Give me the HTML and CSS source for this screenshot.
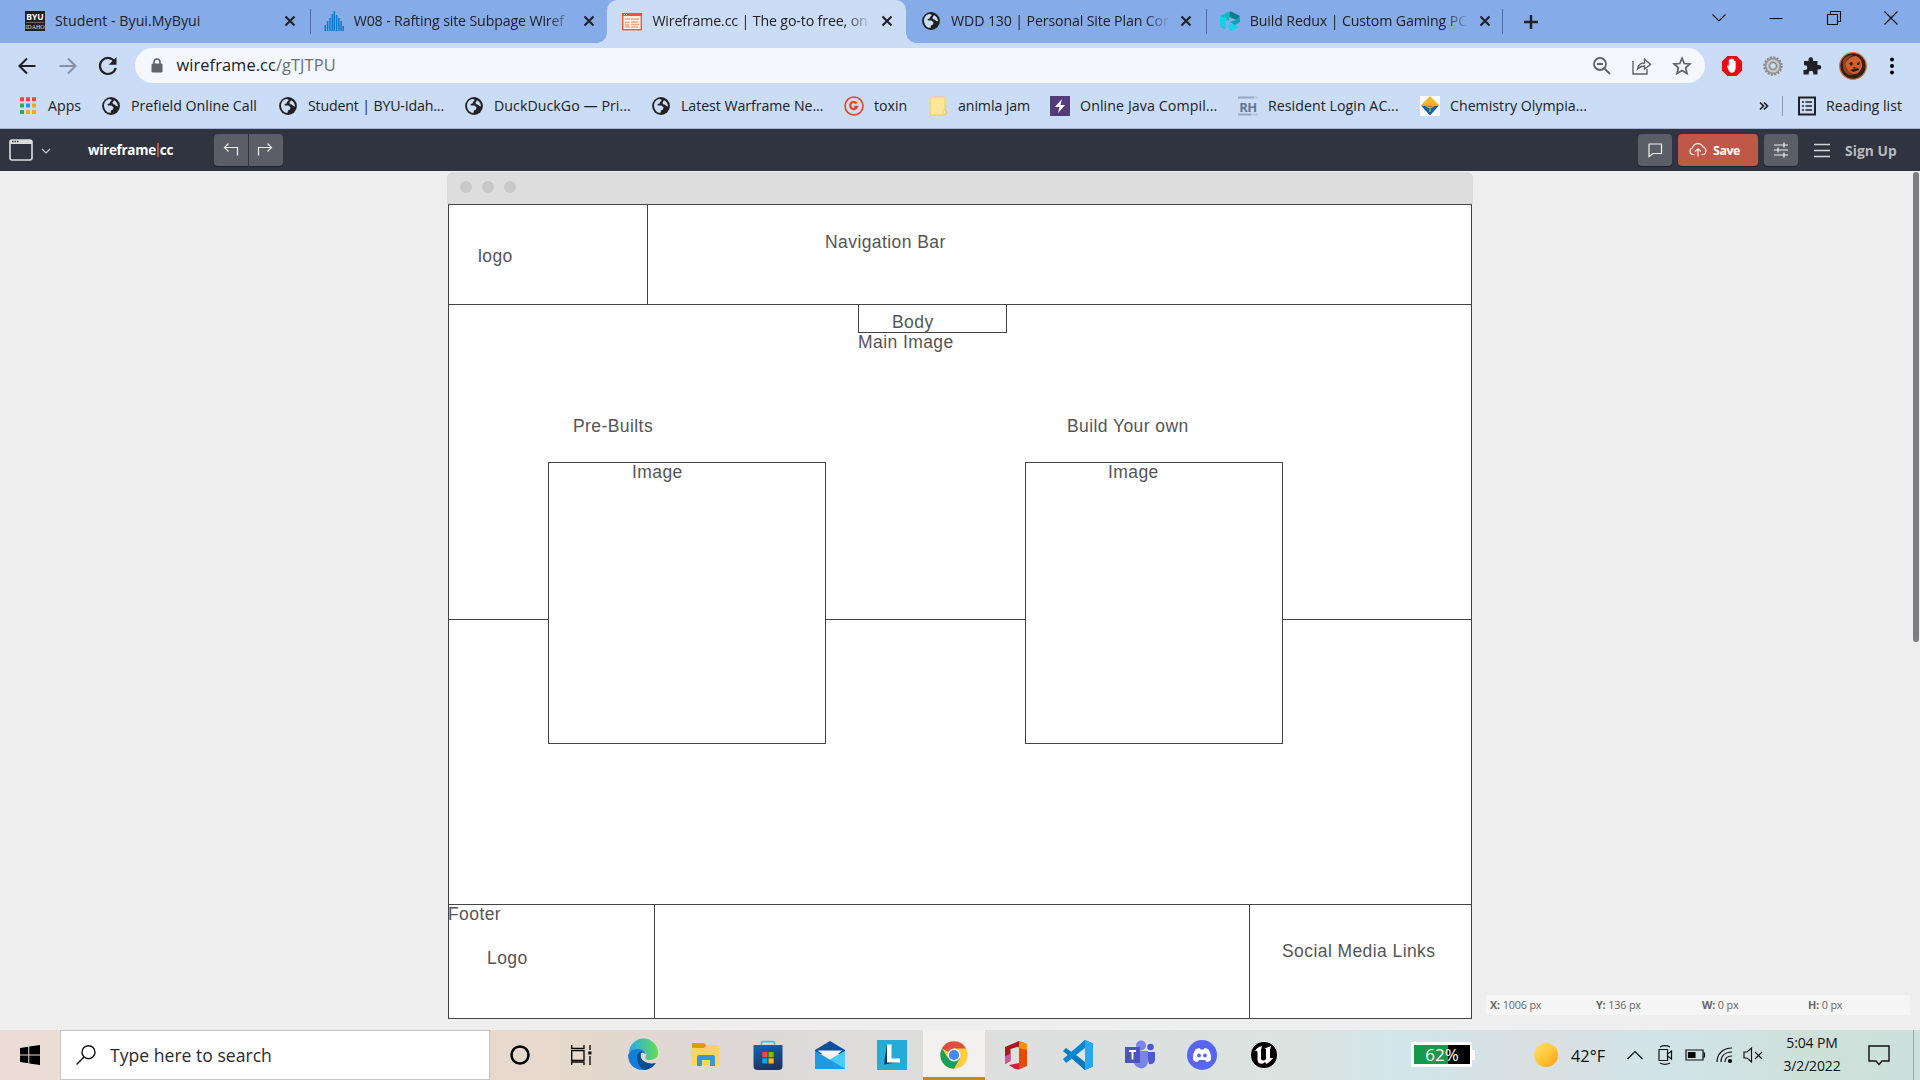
FILE: index.html
```html
<!DOCTYPE html>
<html lang="en">
<head>
<meta charset="utf-8">
<title>Wireframe.cc</title>
<link rel="stylesheet" href="styles.css">
</head>
<body>
<svg width="0" height="0" class="defs" aria-hidden="true">
  <defs>
    <symbol id="globe" viewBox="0 0 18 18"><circle cx="9" cy="9" r="8.9" fill="#202124"/><path d="M2 8.500C2 5 4.300 2.300 7.500 1.900C9 2 9.800 2.600 9.600 3.600L8 5L7.600 6.500L5.500 7L6 8.500H9.500L11.500 10.500L11 12.500L9 13.500L8.500 16C5 16 2 12.500 2 8.500ZM12 3.200C14.500 4.500 16 6.500 16 9.500L14.500 9L12.500 7.500L11 7.200L10.500 5.500Z" fill="#cbdcf6"/></symbol>
    <symbol id="close" viewBox="0 0 12 12"><path d="M1.500 1.500L10.500 10.500M10.500 1.500L1.500 10.500" stroke="#202124" stroke-width="2.100"/></symbol>
  </defs>
</svg>

<header class="tabs">
  <div class="tab">
    <svg class="fav" viewBox="0 0 20 20"><rect width="20" height="20" fill="#231f20"/><text x="10" y="9" class="byu">BYU</text><path d="M1 11.500H19" stroke="#999" stroke-width=".6"/><text x="10" y="18" class="idaho">IDAHO</text></svg>
    <span class="label first">Student - Byui.MyByui</span>
    <svg class="x"><use href="#close"/></svg>
  </div>
  <div class="tab divided">
    <svg class="fav" viewBox="0 0 20 20"><path d="M1.200 20V14M3.600 20V10M6 20V7M8.300 20V3M10.300 20V0M12.600 20V4M14.900 20V7M17.100 20V10M19.200 20V15" stroke="#0a7bcb" stroke-width="1.500"/></svg>
    <span class="label fade">W08 - Rafting site Subpage Wiref</span>
    <svg class="x"><use href="#close"/></svg>
  </div>
  <div class="tab active">
    <svg class="fav" viewBox="0 0 20 20"><rect x=".7" y="2.700" width="18.600" height="16" fill="#fff3ed" stroke="#ee5a24" stroke-width="1.400"/><path d="M0 3.500H20" stroke="#ee5a24" stroke-width="3"/><path d="M2 3.500H5" stroke="#fff" stroke-dasharray="1 1"/><path d="M3 8H8M3 11.500H7M3 14H7M3 16H8M9 8H17M9 11H16M9 13.500H17M9 16H16" stroke="#f5a17e" stroke-width="1.500"/></svg>
    <span class="label fade">Wireframe.cc | The go-to free, on</span>
    <svg class="x"><use href="#close"/></svg>
  </div>
  <div class="tab">
    <svg class="fav globe"><use href="#globe"/></svg>
    <span class="label fade">WDD 130 | Personal Site Plan Cor</span>
    <svg class="x"><use href="#close"/></svg>
  </div>
  <div class="tab divided">
    <svg class="fav" viewBox="0 0 20 20"><path d="M0 5L10 0L9 9L5 10V18L0 15Z" fill="#14b8c4"/><path d="M10 0L20 5L17 9L9 6Z" fill="#087f8c"/><path d="M20 5V11L15 14L10 11L16 9Z" fill="#0aa5b4"/><path d="M10 12L19 16L11 20L8 16ZM0 5L6 7V17L0 15Z" fill="#13d3e8"/></svg>
    <span class="label fade">Build Redux | Custom Gaming PC</span>
    <svg class="x"><use href="#close"/></svg>
  </div>
  <div class="newtab"><svg width="16" height="16" viewBox="0 0 16 16"><path d="M8 1V15M1 8H15" stroke="#202124" stroke-width="2.400"/></svg></div>
  <div class="winctl">
    <svg viewBox="0 0 16 16"><path d="M1.500 4.500L8 11L14.500 4.500" /></svg>
    <svg viewBox="0 0 16 16"><path d="M1.500 8.500H14.500"/></svg>
    <svg viewBox="0 0 16 16"><path d="M1.500 4.500H11.500V14.500H1.500ZM4.500 4.500V1.500H14.500V11.500H11.500"/></svg>
    <svg viewBox="0 0 16 16"><path d="M1.500 1.500L14.500 14.500M14.500 1.500L1.500 14.500"/></svg>
  </div>
</header>

<nav class="toolbar">
  <svg class="ic" viewBox="0 0 20 20"><path d="M18.500 10H3M10 2.500L2.500 10L10 17.500" fill="none" stroke="#202124" stroke-width="2.100"/></svg>
  <svg class="ic" viewBox="0 0 20 20"><path d="M1.500 10H17M10 2.500L17.500 10L10 17.500" fill="none" stroke="#8792a6" stroke-width="2.100"/></svg>
  <svg class="ic" viewBox="0 0 20 20"><path d="M16.600 5.500A8 8 0 1 0 17.700 12" fill="none" stroke="#202124" stroke-width="2.200"/><path d="M18.500 1V8.800H10.800Z" fill="#202124"/></svg>
  <div class="omnibox">
    <svg class="lock" viewBox="0 0 12 15"><path d="M3 6V4A3 3 0 0 1 9 4V6" fill="none" stroke="#5f6368" stroke-width="1.600"/><rect x=".5" y="5.500" width="11" height="9" rx="1.300" fill="#5f6368"/></svg>
    <span class="url">wireframe.cc<i>/gTJTPU</i></span>
    <div class="omni-actions">
      <svg class="ic" viewBox="0 0 20 20"><g fill="none" stroke="#5f6368" stroke-width="1.800"><circle cx="8" cy="8" r="6"/><path d="M5 8H11M12.500 12.500L18 18"/></g></svg>
      <svg class="ic" viewBox="0 0 20 20"><path d="M1 5V18H15V13M5.500 13C6 9 8.500 7 12.500 7V3L18.500 8.500L12.500 13V10C9.500 10 7.500 11 5.500 13Z" fill="none" stroke="#5f6368" stroke-width="1.400"/></svg>
      <svg class="ic" viewBox="0 0 20 20"><path d="M10 2.200L12.200 7.500L18 8L13.600 11.800L15 17.500L10 14.500L5 17.500L6.400 11.800L2 8L7.800 7.500Z" fill="none" stroke="#5f6368" stroke-width="1.700"/></svg>
    </div>
  </div>
  <div class="ext">
    <svg viewBox="0 0 24 24" width="22" height="22"><path d="M7 1H17L23 7V17L17 23H7L1 17V7Z" fill="#ea0b12"/><path d="M7 12L8 11.500L9 13V5.500Q9.800 4.700 10.500 5.500V11V4.500Q11.300 3.500 12 4.500V11V5Q13 4.200 13.700 5V11.500V7Q14.500 6 15.500 7V15Q15 19 12 19Q9.500 19 8.500 16.500Z" fill="#fff" stroke="#fff" stroke-width=".8"/></svg>
    <svg viewBox="0 0 20 20" width="20" height="20"><circle cx="10" cy="10" r="8.500" fill="none" stroke="#858585" stroke-width="2.400" stroke-dasharray="2 1.340"/><circle cx="10" cy="10" r="5.700" fill="none" stroke="#a8a8a8" stroke-width="5"/><circle cx="10" cy="10" r="5.500" fill="none" stroke="#cdcdcd" stroke-width="1.500"/><circle cx="10" cy="10" r="3.400" fill="none" stroke="#777" stroke-width=".9"/><circle cx="10" cy="10" r="7.600" fill="none" stroke="#808080" stroke-width=".7"/></svg>
    <svg viewBox="0 0 20 20" width="20" height="20"><path d="M2 5H6.500V3.500A2.300 2.300 0 0 1 11.100 3.500V5H15.500V9H17A2.300 2.300 0 0 1 17 13.600H15.500V18.500H11.300V17A2.300 2.300 0 0 0 6.700 17V18.500H1.500V14H3A2.300 2.300 0 0 0 3 9.300H2Z" fill="#202124"/></svg>
    <svg viewBox="0 0 28 28" width="28" height="28"><circle cx="14" cy="14" r="13.300" fill="#332119" stroke="#dc7038" stroke-width="1.300"/><path d="M6 12Q10 4 17 4Q24 7 23 15Q20 23 14 22Q8 20 6 12Z" fill="#d35f2d"/><path d="M4 8Q8 3 14 3Q8 6 6 12Q8 20 15 23Q6 24 4 16Z" fill="#8d4526"/><path d="M10 11L13 10L14 12L12 14ZM18 11L21 10L20 13L18 13ZM14 15L17 15L15 17ZM11 18L19 16L20 18L14 20Z" fill="#31180f"/></svg>
    <svg viewBox="0 0 6 20" width="6" height="20"><circle cx="3" cy="3.500" r="2" /><circle cx="3" cy="10" r="2"/><circle cx="3" cy="16.500" r="2"/></svg>
  </div>
</nav>

<nav class="bookmarks">
  <a class="b0"><svg viewBox="0 0 20 20"><path d="M2 3.200H6M8 3.200H12M14 3.200H18" stroke="#f44336"/><path d="M2 9.500H6M2 16H6" stroke="#34a853"/><path d="M8 9.500H12" stroke="#2196f3"/><path d="M14 9.500H18M8 16H12M14 16H18" stroke="#f9ab00"/></svg><span>Apps</span></a>
  <a class="b1"><svg><use href="#globe"/></svg><span>Prefield Online Call</span></a>
  <a class="b2"><svg><use href="#globe"/></svg><span>Student | BYU-Idah...</span></a>
  <a class="b3"><svg><use href="#globe"/></svg><span>DuckDuckGo — Pri...</span></a>
  <a class="b4"><svg><use href="#globe"/></svg><span>Latest Warframe Ne...</span></a>
  <a class="b5"><svg viewBox="0 0 20 20"><circle cx="10" cy="10" r="9" fill="none" stroke="#e8441f" stroke-width="1.600"/><path d="M12.600 7.500A3.500 3.500 0 1 0 13 10.800H10.300" fill="none" stroke="#e8441f" stroke-width="2.200"/></svg><span>toxin</span></a>
  <a class="b6"><svg viewBox="0 0 20 20"><path d="M2 2Q2 1 3 1H16Q17 1 17 2V14H18V18Q18 19 17 19H3Q2 19 2 18Z" fill="#ffe69b" stroke="#f1cd58" stroke-width="1"/><path d="M15 14H18V18H15Z" fill="#ffe9a5" stroke="#e9c44b" stroke-width=".7"/></svg><span>animla jam</span></a>
  <a class="b7"><svg viewBox="0 0 20 20"><path d="M0 0H20V20H0Z" fill="#543b79"/><path d="M12 3L5 11H9.500L8 17L15 9H10.500Z" fill="#fff"/></svg><span>Online Java Compil...</span></a>
  <a class="b8"><svg viewBox="0 0 20 20"><path d="M0 1.500H16M0 18.500H13" stroke="#94a8c0" stroke-width="2"/><path d="M16 1.500H20M13 18.500H20" stroke="#b9c7da" stroke-width="2"/><text x="10" y="15.500" class="rh">RH</text></svg><span>Resident Login AC...</span></a>
  <a class="b9"><svg viewBox="0 0 20 20"><path d="M0 0H20V20H0Z" fill="#fff"/><path d="M10 0L19 9H1Z" fill="#f5b52e"/><path d="M1 9.500H19L10 19.500Z" fill="#155ea5"/><path d="M6 9.500Q10 6 14 9.500Q10 14 6 9.500M10 8V16" fill="none" stroke="#eaa92c" stroke-width="1.200"/></svg><span>Chemistry Olympia...</span></a>
  <div class="more">
    <svg class="chev" viewBox="0 0 10 10"><path d="M1 1.500L4.500 5L1 8.500M5 1.500L8.500 5L5 8.500" fill="none" stroke="#202124" stroke-width="1.700"/></svg>
    <i></i>
    <svg viewBox="0 0 20 20"><rect x="2" y="1.500" width="16" height="17" fill="none" stroke="#202124" stroke-width="2"/><path d="M5 6H7M8.500 6H15M5 10H7M8.500 10H15M5 14H7M8.500 14H15" stroke="#202124" stroke-width="1.700"/></svg>
    <span>Reading list</span>
  </div>
</nav>

<div class="appbar">
  <svg class="winicon" viewBox="0 0 24 22"><rect x="1" y="1" width="22" height="20" rx="2" fill="none" stroke="#dcdcdc" stroke-width="1.600"/><path d="M1 3H23" stroke="#dcdcdc" stroke-width="4"/><path d="M3 2.500H10" stroke="#2f3440" stroke-width="1.300" stroke-dasharray="1.500 1"/></svg>
  <svg class="drop" viewBox="0 0 10 8"><path d="M1 2L5 6L9 2" fill="none" stroke="#c8cacd" stroke-width="1.200"/></svg>
  <b class="brand">wireframe<i></i>cc</b>
  <div class="undo">
    <button class="btn left"><svg viewBox="0 0 18 18"><path d="M6.500 2.500L2.500 6.500L6.500 10.500M2.500 6.500H15.500V14.500" /></svg></button>
    <button class="btn right"><svg viewBox="0 0 18 18"><path d="M10.500 2.500L14.500 6.500L10.500 10.500M14.500 6.500H1.500V14.500"/></svg></button>
  </div>
  <div class="actions">
    <button class="btn"><svg viewBox="0 0 18 18"><path d="M3 3H15.500V12.500H7L3 15.500Z"/></svg></button>
    <button class="btn save"><svg viewBox="0 0 18 18"><path d="M5.500 13.500H4A3.300 3.300 0 0 1 3.500 7A5.500 5.500 0 0 1 14 6A4 4 0 0 1 14.500 13.500H12.500M9 15.500V8M6 10.500L9 7.800L12 10.500"/></svg>Save</button>
    <button class="btn"><svg viewBox="0 0 18 18"><path d="M2 4H16M2 9H16M2 14H16M12 1.500V6.500M6 6.500V11.500M12 11.500V16.500"/></svg></button>
    <svg class="burger" viewBox="0 0 16 16"><path d="M0 2.500H16M0 8.500H16M0 14.500H16" stroke="#d5d6d8" stroke-width="1.400"/></svg>
    <b class="signup">Sign Up</b>
  </div>
</div>

<!-- Drawing canvas: boxes and labels sit where the user dropped them -->
<main class="canvas">
  <div class="mock">
    <div class="mockbar"><i></i><i></i><i></i></div>
    <div class="sheet">
      <div class="box nav"></div><div class="box logo-box"></div>
      <div class="box upper"></div><div class="box lower"></div>
      <div class="box body-box"></div><div class="box pic1"></div><div class="box pic2"></div>
      <div class="box foot"></div><div class="box foot-mid"></div>
      <p class="l1">logo</p><p class="l2">Navigation Bar</p><p class="l3">Body</p><p class="l4">Main Image</p>
      <p class="l5">Pre-Builts</p><p class="l6">Build Your own</p><p class="l7">Image</p><p class="l8">Image</p>
      <p class="l9">Footer</p><p class="l10">Logo</p><p class="l11">Social Media Links</p>
    </div>
  </div>
  <div class="scroll"></div>
  <div class="status"><span><b>X:</b> 1006 px</span><span><b>Y:</b> 136 px</span><span><b>W:</b> 0 px</span><span><b>H:</b> 0 px</span></div>
</main>

<footer class="taskbar">
  <div class="start"><svg viewBox="0 0 20 20"><path d="M0 3L8.300 1.800V9.500H0ZM9.300 1.600L20 0V9.500H9.300ZM0 10.500H8.300V18.200L0 17ZM9.300 10.500H20V20L9.300 18.400Z"/></svg></div>
  <div class="search"><svg viewBox="0 0 20 20"><circle cx="12.500" cy="7.200" r="6.500"/><path d="M8 12L.6 19.400"/></svg><span>Type here to search</span></div>
  <div class="apps">
    <div><svg viewBox="0 0 20 20" width="20" height="20"><circle cx="10" cy="10" r="8.500" fill="none" stroke="#000" stroke-width="2.500"/></svg></div>
    <div><svg viewBox="0 0 20 20" width="20" height="20"><path d="M.7 0V3.500H13V0M.7 5.700H13V15.300H.7ZM.7 20V17H13V20M19 0V5M19 11V20" fill="none" stroke="#000" stroke-width="1.300"/><path d="M17.300 6.500H20.500V9.500H17.300Z"/></svg></div>
    <div><svg viewBox="0 0 30 30"><defs><linearGradient id="e1"><stop offset="0" stop-color="#2aa8e8"/><stop offset="1" stop-color="#63dd55"/></linearGradient></defs><path d="M1 13A14.500 14.500 0 0 1 30 13C30 18 26 20 21 20C17 20 17 18 18 16Q19 12 14 10Q7 7 1 13Z" fill="url(#e1)"/><path d="M0 15Q3 8 10 9Q16 9 18 14Q11 10 10 18Q10 26 19 29.500C8 32 0 25 0 15Z" fill="#137dd8"/><path d="M9 18Q9 12 14 10.800Q12 14 13 18Q17 25 28 23Q24 29 17 30Q10 28 9 18Z" fill="#0b4d94"/></svg></div>
    <div><svg viewBox="0 0 30 30"><path d="M1 3H13L15 5V8H1Z" fill="#dba000"/><path d="M1 8L13 8L16 5H28V25H1Z" fill="#ffd460"/><path d="M6 26V17Q6 15 8 15H22Q24 15 24 17V26H19V20H11V26Z" fill="#3c96dc"/></svg></div>
    <div><svg viewBox="0 0 30 30"><defs><linearGradient id="s1" x1="0" y1="0" x2=".3" y2="1"><stop offset="0" stop-color="#0c65b9"/><stop offset="1" stop-color="#1f3561"/></linearGradient></defs><path d="M8.500 7V2.700Q8.500 1.700 9.500 1.700H20.500Q21.500 1.700 21.500 2.700V7" fill="none" stroke="#39c4f5" stroke-width="1.700"/><path d="M.5 5H29.500V26Q29.500 30 25.500 30H4.500Q.5 30 .5 26Z" fill="url(#s1)"/><path d="M9.300 12H14.500V17.300H9.300Z" fill="#f25022"/><path d="M15.500 12H20.700V17.300H15.500Z" fill="#7fba00"/><path d="M9.300 18.300H14.500V23.500H9.300Z" fill="#00a4ef"/><path d="M15.500 18.300H20.700V23.500H15.500Z" fill="#ffb900"/></svg></div>
    <div><svg viewBox="0 0 30 30"><path d="M0 10L15 1L30 10V14H0Z" fill="#0b50a0"/><path d="M2.500 10.500H27.500L15 20Z" fill="#f4f4f4"/><path d="M0 11L15 20L30 11V29H0Z" fill="#28b0ee"/><path d="M30 11V29L15 19.500Z" fill="#48ccf8"/><path d="M0 11L30 29H0Z" fill="#1e9ae4"/></svg></div>
    <div><svg viewBox="0 0 30 30"><path d="M0 0H30V30H0Z" fill="#26abd8"/><path d="M10 4L7 24.500L21 22L10 20Z" fill="#073564"/><path d="M10 4.500H14.500V18.500H23V22.500H10Z" fill="#fff"/></svg></div>
    <div class="current"><svg viewBox="0 0 30 30"><circle cx="15" cy="15" r="13.700" fill="#ffcd40"/><path d="M15 15L2.800 8.500A13.700 13.700 0 0 1 27 8.500H15Z" fill="#dc4f42"/><path d="M3 8.500A13.700 13.700 0 0 0 15 28.700L21 18L9 18Z" fill="#169f5b"/><circle cx="15" cy="15" r="6.500" fill="#f3f3f3"/><circle cx="15" cy="15" r="5.100" fill="#4688f4"/></svg></div>
    <div><svg viewBox="0 0 30 30"><path d="M18 1L26 4V26L18 29.500Z" fill="#e54b08"/><path d="M18 1L26 4V10L17 8Z" fill="#f79009"/><path d="M4 7L18 1V6.500L9.500 9V21L4 24Z" fill="#a51824"/><path d="M4 16L9 14V21L4 24Z" fill="#ce559b"/><path d="M8 25L18 23V29.500L14 29Z" fill="#d91d3d"/></svg></div>
    <div><svg viewBox="0 0 30 30"><path d="M22 0L30 3.500V26.500L22 30L6 15.500Z" fill="#087bbd"/><path d="M22 0L30 3.500V26.500L22 30Z" fill="#26a9f1"/><path d="M3 8L22 22V30L0 11Z" fill="#087bbd"/><path d="M0 19L22 0V9L3 23Z" fill="#0686ce"/><path d="M22 8V22L13 15Z" fill="#dfe5e4"/></svg></div>
    <div><svg viewBox="0 0 30 30"><circle cx="16" cy="5.500" r="5" fill="#7b83eb"/><circle cx="25.500" cy="7" r="3.300" fill="#5059c9"/><path d="M21 12H30V20Q29 25 24 24Z" fill="#5059c9"/><path d="M9 11H23V22Q22 28 16 28.500Q10 27 9 23Z" fill="#7b83eb"/><path d="M0 7H15V23H0Z" fill="#4b53bc"/><path d="M4 11H11M7.500 11V19.500" stroke="#fff" stroke-width="1.900"/></svg></div>
    <div><svg viewBox="0 0 30 30"><circle cx="15" cy="15" r="15" fill="#5865f2"/><path d="M6 20Q5.500 13 9 9L12.500 8L13.500 9.500H16.500L17.500 8L21 9Q24.500 13 24 20Q22 22 19.500 22L18 20H12L10.500 22Q8 22 6 20Z" fill="#fff"/><circle cx="12" cy="15.500" r="1.900" fill="#5865f2"/><circle cx="18" cy="15.500" r="1.900" fill="#5865f2"/></svg></div>
    <div><svg viewBox="0 0 30 30"><circle cx="15" cy="15" r="13.700" fill="#000" stroke="#fff"/><path d="M6 11Q8 7 13 6L12 10V19Q14 22 17 19V9L15.500 8.500L22 6L21 10V18L24 18Q20 23 17.500 24L16 22Q14 25 9.500 23L8.500 20V12Q8 10 6 11Z" fill="#fff"/></svg></div>
  </div>
  <div class="battery"><span>62%</span></div>
  <div class="weather"><i></i><span>42°F</span></div>
  <div class="tray">
    <svg viewBox="0 0 20 20"><path d="M2.500 14L10 6.500L17.500 14"/></svg>
    <svg viewBox="0 0 20 20"><path d="M4 4.500H12.500V15.500H4ZM12.500 9L16.500 6V14L12.500 11M5 2Q10-.8 15 2M5 18Q10 20.800 15 18"/></svg>
    <svg viewBox="0 0 20 20"><path d="M1 5H18V15H1ZM18 8H19.500V12H18"/><path d="M3.500 7.500H10V12.500H3.500Z" fill="#000"/></svg>
    <svg viewBox="0 0 20 20"><path d="M2 17C2 9 8 3 17 3M6 17C6 11 10 7 17 7M10 17C10 13 13 11 17 11"/><circle cx="15" cy="16" r="1.500" fill="#000"/></svg>
    <svg viewBox="0 0 20 20"><path d="M1 7H4L8.500 3V17L4 13H1ZM12 7L19 14M19 7L12 14"/></svg>
  </div>
  <div class="clock"><span>5:04 PM</span><span>3/2/2022</span></div>
  <div class="notif"><svg viewBox="0 0 22 22"><path d="M1 2H21V17H14L11 20.500L8 17H1Z"/></svg></div>
</footer>
</body>
</html>
```
FILE: styles.css
```css
* { box-sizing: border-box; }
body { margin: 0; width: 1920px; height: 1080px; overflow: hidden; display: flex; flex-direction: column; font-family: "Open Sans", "Noto Sans", sans-serif; color: #202124; }
svg { display: block; flex: none; overflow: visible; }
i { font-style: normal; }
.defs { position: absolute; }

.tabs { height: 43px; background: #85abe9; display: flex; padding-left: 10px; }
.tab { width: 298.7px; height: 43px; display: flex; align-items: center; padding: 0 0 1px 15px; position: relative; flex: none; }
.fav { width: 20px; height: 20px; margin-right: 10px; }
.globe { padding: 1px; }
.label { width: 220px; font-size: 14.200px; letter-spacing: -.14px; white-space: nowrap; line-height: 24px; }
.first { letter-spacing: .04px; }
.fade { -webkit-mask-image: linear-gradient(90deg, #000 88%, transparent); mask-image: linear-gradient(90deg, #000 88%, transparent); }
.x { width: 12px; height: 12px; margin-left: 9px; }
.divided::before, .divided::after { content: ""; position: absolute; top: 9px; height: 25px; width: 1px; background: #57719b; }
.divided::before { left: 1px; }
.divided:nth-child(2)::after { display: none; }
.divided::after { right: 0; }
.active { background: #cbdcf6; border-radius: 10px 10px 0 0; }
.active::before, .active::after { content: ""; position: absolute; bottom: 0; width: 10px; height: 10px; }
.active::before { left: -10px; background: radial-gradient(circle at 0 0, transparent 9.5px, #cbdcf6 10px); }
.active::after { right: -10px; background: radial-gradient(circle at 100% 0, transparent 9.5px, #cbdcf6 10px); }
.byu { font: bold 8.500px "Open Sans", sans-serif; fill: #fff; text-anchor: middle; }
.idaho { font: 6px "Liberation Serif", serif; fill: #ddd; text-anchor: middle; }
.newtab { width: 56px; display: flex; align-items: center; justify-content: center; }
.winctl { margin-left: auto; display: flex; gap: 41.500px; padding: 10px 21px 0 0; }
.winctl svg { width: 16px; height: 16px; fill: none; stroke: #111; stroke-width: 1.100; }

.toolbar { height: 46px; background: #cbdcf6; display: flex; align-items: center; padding: 0 25px 1px 17px; }
.toolbar > .ic { margin-right: 20.500px; }
.ic { width: 20px; height: 20px; }
.omnibox { width: 1570px; height: 35px; border-radius: 18px; background: #f4f7fc; display: flex; align-items: center; padding: 0 13px 0 16px; margin-left: -4px; }
.lock { width: 12px; height: 15px; margin-right: 14px; }
.url { font-size: 16.400px; letter-spacing: .08px; position: relative; top: -1px; }
.url i { color: #6b6f76; }
.omni-actions { margin-left: auto; display: flex; gap: 20px; }
.ext { margin-left: auto; display: flex; align-items: center; gap: 19.500px; }
.ext svg:nth-child(4) { margin-left: -3px; }
.ext svg:nth-child(5) { margin-left: 3px; }

.bookmarks { height: 40px; background: #cbdcf6; border-bottom: 1px solid #a8b6cd; display: flex; align-items: center; padding: 0 18px 6px 18px; font-size: 14.200px; }
.bookmarks a { display: flex; align-items: center; white-space: nowrap; flex: none; }
.bookmarks a svg { width: 20px; height: 20px; margin-right: 10px; }
.b0 svg { stroke-width: 4; }
.b0 { width: 83px; } .b1 { width: 177px; } .b2 { width: 186px; letter-spacing: -.17px; } .b3 { width: 187px; letter-spacing: .04px; } .b4 { width: 193px; letter-spacing: -.06px; } .b5 { width: 84px; } .b6 { width: 122px; letter-spacing: -.1px; } .b7 { width: 188px; letter-spacing: .1px; } .b8 { width: 182px; letter-spacing: .04px; }
.b1 svg, .b2 svg, .b3 svg, .b4 svg { padding: 1px; }
.rh { font: bold 13px "Open Sans", sans-serif; fill: #5c7898; text-anchor: middle; letter-spacing: -.5px; }
.more { margin-left: auto; display: flex; align-items: center; white-space: nowrap; }
.more i { width: 1px; height: 20px; background: #8d9bb4; margin: 0 14px 0 13px; }
.more svg { width: 20px; height: 20px; margin-right: 9px; }
.more .chev { width: 10px; height: 10px; margin: 0; }

.appbar { height: 42px; background: #2f3440; display: flex; align-items: center; padding: 0 23px 0 9px; }
.winicon { width: 24px; height: 22px; }
.drop { width: 10px; height: 8px; margin: 2px 37px 0 8px; }
.brand { width: 126px; color: #fff; font-size: 13.500px; letter-spacing: -.3px; display: flex; align-items: center; }
.brand i { width: 2px; height: 14px; background: #c64d42; margin: 0 1px; }
.undo { display: flex; gap: 1px; }
.btn { width: 34px; height: 32px; border: 0; padding: 0; border-radius: 4px; background: #5b5e67; box-shadow: 0 1px 0 #1d2028; display: flex; align-items: center; justify-content: center; }
.btn svg { width: 18px; height: 18px; fill: none; stroke: #eee; stroke-width: 1.200; }
.left { border-radius: 4px 0 0 4px; }
.right { border-radius: 0 4px 4px 0; }
.actions { margin-left: auto; display: flex; align-items: center; gap: 6px; }
.save { width: 80px; background: #bf5848; color: #fff; font: bold 12.500px "Open Sans", sans-serif; letter-spacing: -.5px; gap: 6px; justify-content: flex-start; padding-left: 11px; }
.burger { width: 16px; height: 16px; margin: 0 9px 0 10px; }
.signup { width: 52px; font-size: 13.800px; letter-spacing: .05px; color: #b9bbbe; white-space: nowrap; }

.canvas { height: 859px; background: #eee; position: relative; display: flex; justify-content: center; padding-top: 1px; }
.mock { width: 1026px; }
.mockbar { height: 32px; background: #ddd; border-radius: 6px 6px 0 0; display: flex; gap: 10px; padding: 9px 13px; }
.mockbar i { width: 12px; height: 12px; border-radius: 50%; background: #c9c9c9; }
.sheet { position: relative; height: 815px; margin: 0 1px; background: #fff; }
.box { position: absolute; border: 1px solid #444; background: #fff; }
.nav { left: 0; top: 0; width: 1024px; height: 101px; }
.logo-box { left: 0; top: 0; width: 200px; height: 101px; }
.upper { left: 0; top: 100px; width: 1024px; height: 316px; }
.lower { left: 0; top: 415px; width: 1024px; height: 286px; }
.body-box { left: 410px; top: 100px; width: 149px; height: 29px; }
.pic1 { left: 100px; top: 258px; width: 278px; height: 282px; }
.pic2 { left: 577px; top: 258px; width: 258px; height: 282px; }
.foot { left: 0; top: 700px; width: 1024px; height: 115px; }
.foot-mid { left: 206px; top: 700px; width: 596px; height: 115px; }
.sheet p { position: absolute; margin: 0; font: 17.500px/20px "Liberation Sans", Arial, sans-serif; letter-spacing: .42px; color: #555; white-space: nowrap; }
.l1 { left: 30px; top: 42px; } .l2 { left: 377px; top: 28px; } .l3 { left: 444px; top: 108px; } .l4 { left: 410px; top: 128px; }
.l5 { left: 125px; top: 212px; } .l6 { left: 619px; top: 212px; } .l7 { left: 184px; top: 258px; } .l8 { left: 660px; top: 258px; }
.l9 { left: 0; top: 700px; } .l10 { left: 39px; top: 744px; } .l11 { left: 834px; top: 737px; }
.scroll { position: absolute; right: 1px; top: 1px; width: 6px; height: 470px; border-radius: 3px; background: #7d7d7f; }
.status { position: absolute; left: 1486px; top: 824px; width: 424px; height: 20px; background: #f5f5f5; display: grid; grid-template-columns: repeat(4, 106px); padding-left: 4px; font-size: 10.800px; line-height: 20px; letter-spacing: -.15px; color: #666; }

.taskbar { height: 50px; display: flex; background: linear-gradient(90deg, #ecdcd6 0, #e5d8cc 30%, #ddd8d7 38%, #dedede 50%, #dbe3e0 68%, #d1e6ea 73%, #dadfe1 80%, #d0e4e8 87%, #cfe0d9 94%, #cce1dc 100%); color: #111; }
.taskbar > div { flex: none; }
.start { width: 60px; display: flex; align-items: center; justify-content: center; }
.start svg { width: 20px; height: 20px; }
.search { width: 430px; background: #fff; border: 1px solid #c6c6c8; display: flex; align-items: center; padding-left: 15px; font-size: 17.600px; color: #2b2b2b; }
.search svg { width: 20px; height: 20px; margin-right: 14px; fill: none; stroke: #111; stroke-width: 1.400; }
.apps { display: flex; width: 806px; }
.apps div { width: 62px; flex: none; display: flex; align-items: center; justify-content: center; }
.apps div:nth-child(1) { width: 60px; }
.apps div:nth-child(2) { width: 61px; }
.apps div:nth-child(n+3) svg { width: 30px; height: 30px; }
.apps div:nth-child(3) { width: 64px; }
.apps .current { background: #f3f1f0; border-bottom: 3px solid #cc8628; padding-top: 3px; }
.battery { width: 61px; height: 25px; margin: 12px 0 0 115px; border: 3px solid #fff; border-right-width: 2px; background: linear-gradient(90deg, #149a48 60%, #000 60%); color: #fff; font-size: 17px; display: flex; align-items: center; justify-content: center; position: relative; }
.battery::after { content: ""; position: absolute; right: -5px; top: 5px; width: 3px; height: 10px; background: #fff; }
.weather { margin-left: 62px; width: 84px; display: flex; align-items: center; gap: 13px; font-size: 16.400px; }
.weather i { width: 24px; height: 24px; flex: none; border-radius: 50%; background: linear-gradient(135deg, #ffe36c, #ffc436 55%, #fb9b0c); }
.tray { display: flex; align-items: center; gap: 10px; padding-left: 7px; width: 146px; }
.tray svg { width: 20px; height: 20px; fill: none; stroke: #111; stroke-width: 1.200; }
.tray svg:nth-child(5) { margin-left: -2px; }
.clock { width: 96px; display: flex; flex-direction: column; align-items: center; font-size: 14px; line-height: 23px; padding-top: 1px; letter-spacing: -.15px; }
.notif { width: 54px; border-right: 1px solid #9daaa9; margin-right: 6px; display: flex; align-items: center; padding-left: 8px; }
.notif svg { width: 22px; height: 22px; fill: none; stroke: #111; stroke-width: 1.400; }
```
